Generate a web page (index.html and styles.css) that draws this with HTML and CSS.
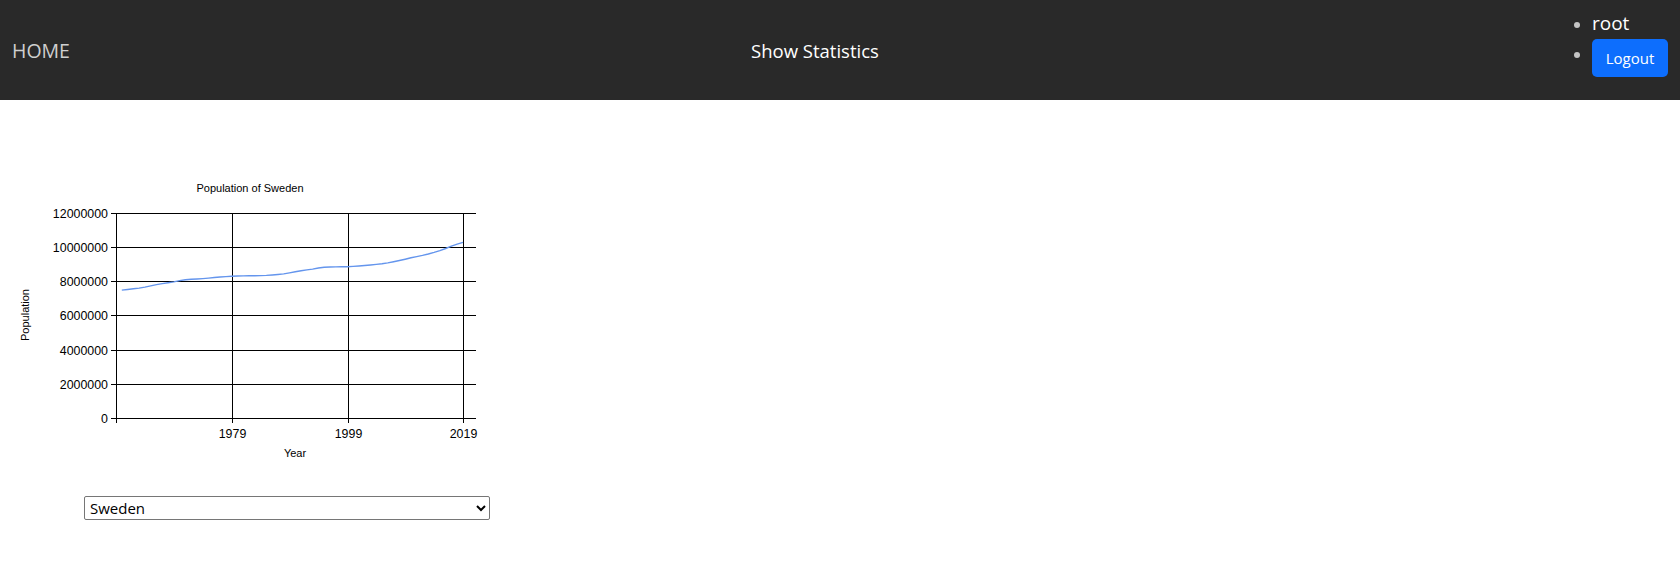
FILE: index.html
```html
<!DOCTYPE html>
<html lang="en">
<head>
<meta charset="utf-8">
<title>Show Statistics</title>
<link rel="stylesheet" href="styles.css">
</head>
<body>
<header class="navbar">
  <a class="brand" href="#">HOME</a>
  <div class="title">Show Statistics</div>
  <ul class="user-menu">
    <li><span class="user-name">root</span></li>
    <li><button class="btn-logout" type="button">Logout</button></li>
  </ul>
</header>
<main class="content">
  <div class="chart-wrap">
    <svg class="chart" width="500" height="320" viewBox="0 150 500 320" xmlns="http://www.w3.org/2000/svg">
      <g class="grid" stroke="#000" stroke-width="1" shape-rendering="crispEdges" fill="none">
        <line x1="111" y1="213.5" x2="476" y2="213.5"/>
        <line x1="111" y1="247.5" x2="476" y2="247.5"/>
        <line x1="111" y1="281.5" x2="476" y2="281.5"/>
        <line x1="111" y1="315.5" x2="476" y2="315.5"/>
        <line x1="111" y1="350.5" x2="476" y2="350.5"/>
        <line x1="111" y1="384.5" x2="476" y2="384.5"/>
        <line x1="111" y1="418.5" x2="476" y2="418.5"/>
        <line x1="116.5" y1="213" x2="116.5" y2="423"/>
        <line x1="232.5" y1="213" x2="232.5" y2="423"/>
        <line x1="348.5" y1="213" x2="348.5" y2="423"/>
        <line x1="463.5" y1="213" x2="463.5" y2="423"/>
      </g>
      <polyline class="series" fill="none" stroke="#6495ED" stroke-width="1.4" stroke-linejoin="round"
        points="121.8,290.1 127.6,289.5 133.4,288.8 139.1,288.1 144.9,287.1 150.7,285.9 156.5,284.6 162.3,283.6 168.1,282.8 173.8,281.9 179.6,280.6 185.4,279.7 191.2,279.3 197.0,279.0 202.8,278.6 208.5,278.1 214.3,277.5 220.1,277.0 225.9,276.6 231.7,276.3 237.5,276.0 243.2,275.9 249.0,275.8 254.8,275.7 260.6,275.6 266.4,275.4 272.2,275.0 277.9,274.5 283.7,273.9 289.5,272.9 295.3,271.8 301.1,270.8 306.9,269.9 312.6,269.1 318.4,268.0 324.2,267.2 330.0,267.0 335.8,266.9 341.6,266.8 347.3,266.7 353.1,266.4 358.9,266.0 364.7,265.5 370.5,265.0 376.3,264.4 382.0,263.8 387.8,262.9 393.6,261.7 399.4,260.5 405.2,259.2 411.0,257.8 416.7,256.6 422.5,255.4 428.3,254.0 434.1,252.4 439.9,250.6 445.7,248.5 451.4,246.2 457.2,244.2 463.0,242.4"/>
      <g class="labels" font-family="'Liberation Sans', Arial, sans-serif" fill="#000">
        <text x="250" y="192" font-size="11" text-anchor="middle">Population of Sweden</text>
        <g font-size="12.4" text-anchor="end">
          <text x="108" y="218">12000000</text>
          <text x="108" y="252">10000000</text>
          <text x="108" y="286">8000000</text>
          <text x="108" y="320">6000000</text>
          <text x="108" y="355">4000000</text>
          <text x="108" y="389">2000000</text>
          <text x="108" y="423">0</text>
        </g>
        <g font-size="12.4" text-anchor="middle">
          <text x="232.5" y="438">1979</text>
          <text x="348.5" y="438">1999</text>
          <text x="463.5" y="438">2019</text>
        </g>
        <text x="295" y="456.5" font-size="11" text-anchor="middle">Year</text>
        <text transform="translate(29,315) rotate(-90)" font-size="11" text-anchor="middle">Population</text>
      </g>
    </svg>
  </div>
  <div class="picker">
    <select class="country-select">
      <option selected>Sweden</option>
      <option>Norway</option>
      <option>Denmark</option>
      <option>Finland</option>
    </select>
  </div>
</main>
</body>
</html>
```
FILE: styles.css
```css
* { box-sizing: border-box; }

html, body {
  margin: 0;
  padding: 0;
  background: #fff;
  font-family: "Open Sans", "Noto Sans", sans-serif;
}

.navbar {
  height: 100px;
  background: #292929;
  display: flex;
  align-items: flex-start;
  justify-content: space-between;
}

.brand {
  margin-left: 12px;
  margin-top: 36px;
  font-size: 19.5px;
  line-height: 30px;
  color: #cfcfcf;
  text-decoration: none;
}

.title {
  margin-top: 36px;
  font-size: 18.5px;
  line-height: 30px;
  color: #fff;
}

.user-menu {
  list-style: disc;
  margin: 8px 12px 0 0;
  padding-left: 32px;
  color: #c4c4c4;
}

.user-menu li {
  line-height: 30px;
}

.user-name {
  color: #fff;
  font-size: 19px;
}

.btn-logout {
  display: inline-block;
  vertical-align: top;
  width: 76px;
  height: 38px;
  padding: 0;
  border: none;
  border-radius: 5px;
  background: #0d6efd;
  color: #fff;
  font-family: "Open Sans", "Noto Sans", sans-serif;
  font-size: 15px;
  line-height: 38px;
  cursor: pointer;
}

.content {
  padding-top: 50px;
}

.chart-wrap {
  height: 320px;
}

.chart {
  display: block;
}

.picker {
  margin-top: 26px;
  margin-left: 84px;
}

.country-select {
  display: block;
  width: 406px;
  height: 24px;
  padding: 0 1px;
  border: 1px solid #767676;
  border-radius: 2px;
  background: #fff;
  color: #000;
  font-family: "Open Sans", "Noto Sans", sans-serif;
  font-size: 15px;
}
```
